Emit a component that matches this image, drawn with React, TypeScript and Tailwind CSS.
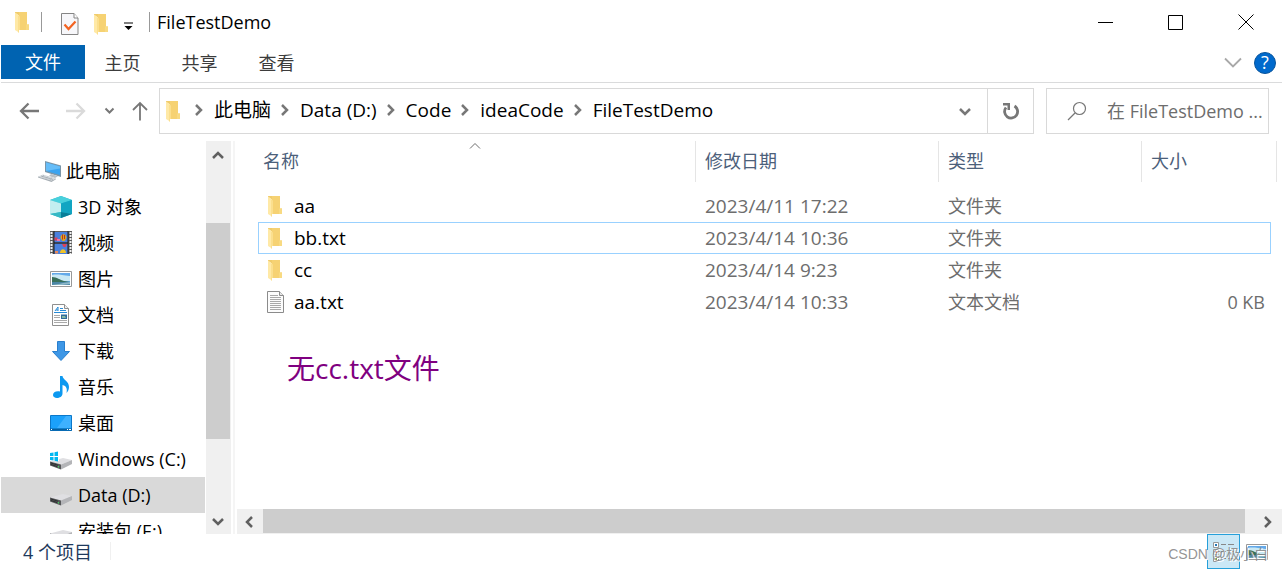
import type { ReactNode } from "react";
import { clsx } from "clsx";

type FileKind = "folder" | "text";

interface FileEntry {
  name: string;
  kind: FileKind;
  modified: string;
  type: string;
  size?: string;
}

interface PlaceItem {
  label: string;
  icon: ReactNode;
  root?: boolean;
}

const files: FileEntry[] = [
  { name: "aa", kind: "folder", modified: "2023/4/11 17:22", type: "文件夹" },
  { name: "bb.txt", kind: "folder", modified: "2023/4/14 10:36", type: "文件夹" },
  { name: "cc", kind: "folder", modified: "2023/4/14 9:23", type: "文件夹" },
  { name: "aa.txt", kind: "text", modified: "2023/4/14 10:33", type: "文本文档", size: "0 KB" },
];

const places: PlaceItem[] = [
  { label: "此电脑", icon: <ComputerIcon />, root: true },
  { label: "3D 对象", icon: <CubeIcon /> },
  { label: "视频", icon: <VideoIcon /> },
  { label: "图片", icon: <PictureIcon /> },
  { label: "文档", icon: <DocumentIcon /> },
  { label: "下载", icon: <DownloadIcon /> },
  { label: "音乐", icon: <MusicIcon /> },
  { label: "桌面", icon: <DesktopIcon /> },
  { label: "Windows (C:)", icon: <DriveIcon windows /> },
  { label: "Data (D:)", icon: <DriveIcon /> },
  { label: "安装包 (E:)", icon: <DriveIcon /> },
];

const crumbs = ["此电脑", "Data (D:)", "Code", "ideaCode", "FileTestDemo"];
const menuTabs = ["主页", "共享", "查看"];

function FolderIcon() {
  return (
    <svg width="16" height="22" viewBox="0 0 16 22" className="shrink-0" aria-hidden>
      <path d="M5 1h8v12.500h2V19H5z" fill="#f6d273" />
      <path d="M12 13.500h3V19h-3z" fill="#f8da82" />
      <path d="M1 1h4v3.500L1 2z" fill="#f0cc6c" />
      <path d="M1 1.500 5 4.500V21.500L1 19z" fill="#ffe9a6" />
      <path d="M4 4.200 6 5.500V19H5v2.500H4z" fill="#fbdf8e" />
    </svg>
  );
}

function TextFileIcon() {
  return (
    <svg width="18" height="24" viewBox="0 0 18 24" className="shrink-0" aria-hidden>
      <path d="M.5 1.500h12l4 4V22.500H.5z" fill="#fcfcfc" stroke="#8b8b8b" />
      <path d="M12.500 1.500v4h4" fill="#e8e8e8" stroke="#8b8b8b" />
      <path d="M3 5.500h8M3 7.500h11M3 9.500h11M3 11.500h11M3 13.500h11M3 15.500h11M3 17.500h11M3 19.500h11" stroke="#a9a9a9" />
    </svg>
  );
}

function PropertiesIcon() {
  return (
    <svg width="18" height="24" viewBox="0 0 18 24" aria-hidden>
      <path d="M.5 1.500H13l4 4.500V22.500H.5z" fill="#f7f7fa" stroke="#858585" />
      <path d="M13 1.500V6h4" fill="#fff" stroke="#858585" />
      <path d="m3.500 12.500 4 4.500 7-7.500" fill="none" stroke="#f26322" strokeWidth="2.200" />
    </svg>
  );
}

function ComputerIcon() {
  return (
    <svg width="24" height="24" viewBox="0 0 24 24" aria-hidden>
      <path d="M7 2 23 6.500V18L7 13z" fill="#7a95a8" />
      <path d="M8 3.500 22 7.500V16L8 12z" fill="#3ba4f0" />
      <path d="m8 3.500 14 4v2L8 12z" fill="#66bdf8" />
      <path d="m13 15 7 2.200-3 1.800-6-2z" fill="#b9c0c5" />
      <path d="m5 15.500 13 4-4.500 2L0 17.500z" fill="#d5dade" />
      <path d="m3 17 12 3.500M6 16.200 4 18M10 17.400 8 19.500M14 18.500l-2 2.300" stroke="#9fa8af" strokeWidth=".7" />
      <path d="m0 17.500 13.500 4 4.500-2v.8L13.500 23 0 18.500z" fill="#a7afb5" />
    </svg>
  );
}

function CubeIcon() {
  return (
    <svg width="24" height="24" viewBox="0 0 24 24" aria-hidden>
      <path d="m12 1 11 4v14l-11 4L1 19V5z" fill="#29b7cc" />
      <path d="m12 1 11 4-11 3.500L1 5z" fill="#49d0dc" />
      <path d="m1 5 11 3.500V17L1 19z" fill="#c3eef0" />
      <path d="m12 8.500 11-3.500v14l-11-2z" fill="#12a5c2" />
      <path d="m12 17 11 2-11 4z" fill="#087e98" />
      <path d="m1 19 11-2v6z" fill="#35b8c4" />
    </svg>
  );
}

function VideoIcon() {
  return (
    <svg width="24" height="24" viewBox="0 0 24 24" aria-hidden>
      <path d="M1 0h22v23H1z" fill="#5b5b5b" />
      <path d="M5 1h14v10.500H5zM5 12.500h14V23H5z" fill="#4a80dc" />
      <path d="M2.500 1v22M21.500 1v22" stroke="#f1f1f1" strokeWidth="2" strokeDasharray="2 1" />
      <path d="M5 0v23M19 0v23M5 12h14" stroke="#1c1c1c" />
      <path d="M11.500 7c0-5 6-5 6 0l-2 3h-2z" fill="#e4a714" />
      <path d="M13.500 3.500v5M15.500 4v4" stroke="#b3362c" />
      <path d="M5.500 6.500h3v3h-3zM13 13h5l-1.500 3h-2z" fill="#d9425b" />
      <path d="M8 8h3v2H8z" fill="#ef73aa" />
      <path d="M11 22c0-5 6-5 6 0z" fill="#f0c32a" />
      <path d="M6 20h3v2.500H6z" fill="#e88a5a" />
    </svg>
  );
}

function PictureIcon() {
  return (
    <svg width="24" height="24" viewBox="0 0 24 24" aria-hidden>
      <path d="M1.500 4.500h21v15h-21z" fill="#fff" stroke="#999" />
      <path d="M3 6h18v12H3z" fill="#63a9e9" />
      <path d="M3 8c5-1 9 0 18 1v5H3z" fill="#c9e8f4" />
      <path d="M3 10c5 0 8 3 12 4l6 1v1H3z" fill="#39705a" />
      <path d="M3 15h18v3H3z" fill="#4b86a5" />
      <path d="m3 18 7-1 4-1 7-1v2l-8 1z" fill="#8eb8c8" />
    </svg>
  );
}

function DocumentIcon() {
  return (
    <svg width="24" height="24" viewBox="0 0 24 24" aria-hidden>
      <path d="M3.500 1.500h12l4 4V22.500h-16z" fill="#fff" stroke="#8f8f8f" />
      <path d="M15.500 1.500v4h4" fill="#eee" stroke="#8f8f8f" />
      <path d="m6 8 3-4v4M7 7h2M11 5.500h3M11 7.500h6M5 9.500h13" fill="none" stroke="#278bd6" />
      <path d="M5 12.500h6M5 14.500h6M5 17.500h13M5 19.500h13" stroke="#aaa" />
      <path d="M12 11.500h6V16h-6z" fill="#316b9c" />
      <path d="M13 13h3l1 2h-4z" fill="#86b9a1" />
    </svg>
  );
}

function DownloadIcon() {
  return (
    <svg width="24" height="24" viewBox="0 0 24 24" aria-hidden>
      <path d="M8.500 2.500h7v10h5L12 21.500l-8.500-9h5z" fill="#3e97e6" stroke="#297fce" />
    </svg>
  );
}

function MusicIcon() {
  return (
    <svg width="24" height="24" viewBox="0 0 24 24" aria-hidden>
      <path d="M11 1h2.500c.5 4 6.500 5 6.500 11 0 3-1.500 5-2.500 6 .8-4 .3-7-4-8v8.500c0 3-3 4.500-5.500 4.500S4 21.600 4 20c0-2.500 3-4.500 7-3.500z" fill="#0d99f0" />
    </svg>
  );
}

function DesktopIcon() {
  return (
    <svg width="24" height="24" viewBox="0 0 24 24" aria-hidden>
      <path d="M1.500 4.500h21v15h-21z" fill="#1ba1fb" stroke="#0b78ca" />
      <path d="M17 5h5v12H8z" fill="#3eb1ff" />
      <path d="M1 18.500h22" stroke="#075f9f" strokeWidth="2" />
      <path d="M2 18.500h1M18 18.500h1M20 18.500h2" stroke="#fff" />
    </svg>
  );
}

function DriveIcon({ windows = false }: { windows?: boolean }) {
  return (
    <svg width="24" height="24" viewBox="0 0 24 24" aria-hidden>
      <path d="M1 14.500 14 11l9 2-11 4.500z" fill="#dfdfe2" />
      <path d="M1 14.500 12 17.500v5L1 18.500z" fill="#56585a" />
      <path d="m12 17.500 11-4.500v4l-11 5.500z" fill="#b4b5b8" />
      <path d="m2 16 7 2.200M2 17.500l6 2" stroke="#2c2e2f" />
      <path d="M9.500 19v1.500" stroke="#3fd45b" />
      {windows && (
        <>
          <path d="M0 3h10v11H0z" fill="#fff" />
          <path d="M1 6l3.500-.6V9H1zM5.500 5.200 9 4.600V9H5.500zM1 10h3.500v3.600L1 13zM5.500 10H9v4.400l-3.500-.6z" fill="#00b7f1" />
        </>
      )}
    </svg>
  );
}

function Chevron({ direction, className }: { direction: "up" | "down" | "left" | "right"; className?: string }) {
  const paths = {
    up: "m3 10 5-5 5 5",
    down: "m3 6 5 5 5-5",
    left: "m11 3-5 5 5 5",
    right: "m5 3 5 5-5 5",
  };
  return (
    <svg width="16" height="16" viewBox="0 0 16 16" className={clsx("shrink-0", className)} aria-hidden>
      <path d={paths[direction]} fill="none" stroke="currentColor" strokeWidth="2.500" />
    </svg>
  );
}

function TitleBar() {
  return (
    <header className="flex h-[44px] shrink-0 items-center pr-px pl-[14px]">
      <FolderIcon />
      <span className="ml-[11px] h-5 w-px bg-[#999]" />
      <button type="button" aria-label="属性" className="ml-[19px] mt-1">
        <PropertiesIcon />
      </button>
      <button type="button" aria-label="新建文件夹" className="ml-[14px] mt-1">
        <FolderIcon />
      </button>
      <button type="button" aria-label="自定义快速访问工具栏" className="ml-[14px] mt-2">
        <svg width="11" height="9" viewBox="0 0 11 9" aria-hidden>
          <path d="M1 1h9" stroke="#000" />
          <path d="M1.500 4h8l-4 4z" />
        </svg>
      </button>
      <span className="ml-[15px] h-5 w-px bg-[#999]" />
      <h1 className="ml-[7px] flex-1 text-black">FileTestDemo</h1>
      <div className="flex h-full">
        <button type="button" aria-label="最小化" className="grid w-[70px] place-items-center">
          <svg width="16" height="16" viewBox="0 0 16 16" aria-hidden>
            <path d="M0 8.500h15" stroke="#000" />
          </svg>
        </button>
        <button type="button" aria-label="最大化" className="grid w-[70px] place-items-center">
          <svg width="16" height="16" viewBox="0 0 16 16" aria-hidden>
            <path d="M.5 1.500h14v14H.5z" fill="none" stroke="#000" />
          </svg>
        </button>
        <button type="button" aria-label="关闭" className="grid w-[70px] place-items-center">
          <svg width="16" height="16" viewBox="0 0 16 16" aria-hidden>
            <path d="m.5 .5 15 15m0-15-15 15" stroke="#000" />
          </svg>
        </button>
      </div>
    </header>
  );
}

function MenuBar() {
  return (
    <nav className="mt-px ml-px flex h-[38px] shrink-0 items-start border-b border-[#dadbdc]">
      <button type="button" className="h-[34px] w-[84px] bg-[#0063b1] text-white">
        文件
      </button>
      <div className="flex">
        {menuTabs.map((tab) => (
          <button key={tab} type="button" className="h-[36px] w-[77px] pr-[2px] text-[#3c3c3c]">
            {tab}
          </button>
        ))}
      </div>
      <div className="ml-auto flex h-[36px] items-center gap-3 pr-[6px]">
        <button type="button" aria-label="展开功能区">
          <svg width="18" height="12" viewBox="0 0 18 12" aria-hidden>
            <path d="m1 1.500 8 8 8-8" fill="none" stroke="#a8a8a8" strokeWidth="1.800" />
          </svg>
        </button>
        <button
          type="button"
          className="flex size-[22px] items-center justify-center rounded-full border border-[#0a559c] bg-[#0069cc] pb-[2px] leading-none text-white"
        >
          ?
        </button>
      </div>
    </nav>
  );
}

function AddressRow() {
  return (
    <div className="flex h-[57px] shrink-0 items-start pt-[5px] pr-[13px]">
      <div className="flex h-[46px] w-[159px] shrink-0 items-center pl-[19px] text-[#777]">
        <button type="button" aria-label="后退">
          <svg width="21" height="18" viewBox="0 0 21 18" aria-hidden>
            <path d="M20 9H2M9.500 1.500 2 9l7.500 7.500" fill="none" stroke="currentColor" strokeWidth="2.300" />
          </svg>
        </button>
        <button type="button" aria-label="前进" className="ml-[25px] text-[#dadada]">
          <svg width="21" height="18" viewBox="0 0 21 18" aria-hidden>
            <path d="M1 9h18M11.500 1.500 19 9l-7.500 7.500" fill="none" stroke="currentColor" strokeWidth="2.300" />
          </svg>
        </button>
        <button type="button" aria-label="最近浏览的位置" className="ml-[18px]">
          <svg width="11" height="8" viewBox="0 0 11 8" aria-hidden>
            <path d="m1.500 1.500 4 4 4-4" fill="none" stroke="currentColor" strokeWidth="2" />
          </svg>
        </button>
        <button type="button" aria-label="上移" className="ml-[17px]">
          <svg width="16" height="20" viewBox="0 0 16 20" aria-hidden>
            <path d="M8 19.500V2M1 9l7-7 7 7" fill="none" stroke="currentColor" strokeWidth="1.800" />
          </svg>
        </button>
      </div>
      <div className="flex h-[46px] min-w-0 flex-1 items-center border border-[#d9d9d9] pl-[5px]">
        <FolderIcon />
        <ol className="mb-[2px] ml-[10px] flex min-w-0 flex-1 items-center text-[19px]">
          {crumbs.map((crumb) => (
            <li key={crumb} className="flex items-center">
              <Chevron direction="right" className="mr-[7px] text-[#777]" />
              <button type="button" className="mr-[6px] whitespace-nowrap text-black">
                {crumb}
              </button>
            </li>
          ))}
        </ol>
        <button type="button" aria-label="以前的位置" className="mr-[14px] text-[#777]">
          <Chevron direction="down" />
        </button>
        <button
          type="button"
          aria-label="刷新"
          className="grid h-full w-[46px] place-items-center border-l border-[#d9d9d9] text-[#777]"
        >
          <svg width="18" height="18" viewBox="0 0 18 18" aria-hidden>
            <path d="M4 5.500a6.500 6.500 0 1 0 8.500-1.500" fill="none" stroke="currentColor" strokeWidth="2.800" />
            <path d="M1 1h7v7H5.500V3.500H1z" fill="currentColor" />
          </svg>
        </button>
      </div>
      <label className="ml-[12px] flex h-[46px] w-[223px] shrink-0 items-center border border-[#d9d9d9] pl-[20px]">
        <svg width="20" height="20" viewBox="0 0 20 20" className="shrink-0" aria-hidden>
          <circle cx="12.500" cy="7.500" r="6" fill="none" stroke="#777" strokeWidth="1.200" />
          <path d="m8 12-7 7" stroke="#777" strokeWidth="1.300" />
        </svg>
        <input
          type="text"
          aria-label="搜索"
          placeholder="在 FileTestDemo ..."
          className="ml-[20px] w-full min-w-0 bg-transparent outline-none placeholder:text-[#6d6d6d]"
        />
      </label>
    </div>
  );
}

function Sidebar() {
  return (
    <aside className="flex w-[231px] shrink-0">
      <ul className="ml-px min-w-0 flex-1 overflow-hidden pt-3">
        {places.map((place) => (
          <li key={place.label}>
            <a
              href="#"
              className={clsx(
                "mr-px flex h-9 items-center whitespace-nowrap text-black",
                place.root ? "gap-1 pl-[37px]" : "gap-[5px] pl-[48px]",
                place.label === "Data (D:)" && "bg-[#d9d9d9]",
              )}
            >
              {place.icon}
              {place.label}
            </a>
          </li>
        ))}
      </ul>
      <div className="flex w-[25px] shrink-0 flex-col items-center bg-[#f0f0f0] text-[#606060]">
        <button type="button" aria-label="向上滚动" className="grid h-[30px] w-full place-items-center pr-px">
          <Chevron direction="up" />
        </button>
        <span className="grow-[52]" />
        <span className="mr-px w-6 grow-[216] bg-[#cdcdcd]" />
        <span className="grow-[69]" />
        <button type="button" aria-label="向下滚动" className="grid h-[26px] w-full place-items-center pr-px">
          <Chevron direction="down" />
        </button>
      </div>
    </aside>
  );
}

function HeaderCell({ label, last = false, sorted = false }: { label: string; last?: boolean; sorted?: boolean }) {
  return (
    <th scope="col" colSpan={last ? 2 : 1} aria-sort={sorted ? "ascending" : undefined} className="h-[49px] p-0 align-top font-normal">
      <button
        type="button"
        className={clsx(
          "relative block h-[41px] w-full border-r border-[#e5e5e5] pb-[2px] text-left text-[#4c607a]",
          sorted ? "pl-[5px]" : "pl-[9px]",
        )}
      >
        {label}
        {sorted && (
          <svg width="12" height="8" viewBox="0 0 12 8" className="absolute top-px left-1/2 -translate-x-2" aria-hidden>
            <path d="m1 6.500 5-5 5 5" fill="none" stroke="#6d6d6d" />
          </svg>
        )}
      </button>
    </th>
  );
}

function FileRow({ file, focused }: { file: FileEntry; focused: boolean }) {
  const cell = clsx("h-8 border-y p-0 text-[#6d6d6d]", focused ? "border-[#99d1ff]" : "border-transparent");
  return (
    <tr>
      <td className={clsx(cell, "border-l")}>
        <div className="flex items-center pl-2 text-[19px] text-black">
          <span className="flex w-[27px]">{file.kind === "folder" ? <FolderIcon /> : <TextFileIcon />}</span>
          {file.name}
        </div>
      </td>
      <td className={clsx(cell, "pl-[9px] text-[19px]")}>{file.modified}</td>
      <td className={clsx(cell, "pl-[9px]")}>{file.type}</td>
      <td className={clsx(cell, "border-r pr-[5px] text-right")}>{file.size}</td>
      <td className="p-0" />
    </tr>
  );
}

function FilePane() {
  return (
    <main className="ml-[2px] flex min-w-0 flex-1 flex-col border-l-2 border-[#f5f5f5]">
      <div className="min-h-0 flex-1 overflow-hidden pr-[5px] pl-[23px]">
        <table className="w-full table-fixed border-separate border-spacing-0">
          <colgroup>
            <col />
            <col className="w-[243px]" />
            <col className="w-[203px]" />
            <col className="w-[129px]" />
            <col className="w-[6px]" />
          </colgroup>
          <thead>
            <tr>
              <HeaderCell label="名称" sorted />
              <HeaderCell label="修改日期" />
              <HeaderCell label="类型" />
              <HeaderCell label="大小" last />
            </tr>
          </thead>
          <tbody>
            {files.map((file) => (
              <FileRow key={file.name} file={file} focused={file.name === "bb.txt"} />
            ))}
          </tbody>
        </table>
        <p className="mt-[30px] ml-[29px] text-[28px] leading-10 text-[#800080]">无cc.txt文件</p>
      </div>
      <div className="ml-[2px] flex h-[25px] shrink-0 bg-[#f0f0f0] text-[#606060]">
        <button type="button" aria-label="向左滚动" className="grid w-[26px] place-items-center pr-[2px]">
          <Chevron direction="left" />
        </button>
        <span className="mb-px flex-1 bg-[#cdcdcd]" />
        <button type="button" aria-label="向右滚动" className="grid w-[37px] place-items-center pl-2">
          <Chevron direction="right" />
        </button>
      </div>
    </main>
  );
}

function StatusBar() {
  return (
    <footer className="relative flex h-9 shrink-0 items-start pr-[13px] pl-[23px] text-[#1e395b]">
      <span className="flex h-[35px] items-center">4 个项目</span>
      <span className="mt-2 ml-[18px] h-[18px] w-px bg-[#f0f0f0]" />
      <div className="ml-auto flex items-center gap-[5px]">
        <button
          type="button"
          aria-label="详细信息"
          className="grid h-[35px] w-[33px] place-items-center border border-[#26a0da] bg-[#cbe8f6]"
        >
          <svg width="22" height="22" viewBox="0 0 22 22" aria-hidden>
            <path d="M.5 1.500h5v5h-5zM.5 8.500h5v5h-5zM.5 15.500h5v5h-5z" fill="#fff" stroke="#999" />
            <path d="M2 4h2" stroke="#2778b5" strokeWidth="2" />
            <path d="M2 11h2" stroke="#c43d35" strokeWidth="2" />
            <path d="M2 18h2" stroke="#639c43" strokeWidth="2" />
            <path d="M8 3.500h5M15 3.500h6M8 10.500h5M15 10.500h6M8 17.500h5M15 17.500h6" stroke="#888" />
          </svg>
        </button>
        <button type="button" aria-label="大缩略图">
          <PictureIcon />
        </button>
      </div>
      <span className="absolute right-[14px] bottom-[4px] font-['Liberation_Sans','Noto_Sans_CJK_SC',sans-serif] text-[14px] text-[#888]/90 [text-shadow:1px_1px_0_#fff]">
        CSDN @极小白
      </span>
    </footer>
  );
}

export default function App() {
  return (
    <div className="flex h-screen flex-col overflow-hidden bg-white font-['Open_Sans','Noto_Sans_CJK_SC',sans-serif] text-[18px] leading-6">
      <TitleBar />
      <MenuBar />
      <AddressRow />
      <div className="mt-px flex min-h-0 flex-1">
        <Sidebar />
        <FilePane />
      </div>
      <StatusBar />
    </div>
  );
}
